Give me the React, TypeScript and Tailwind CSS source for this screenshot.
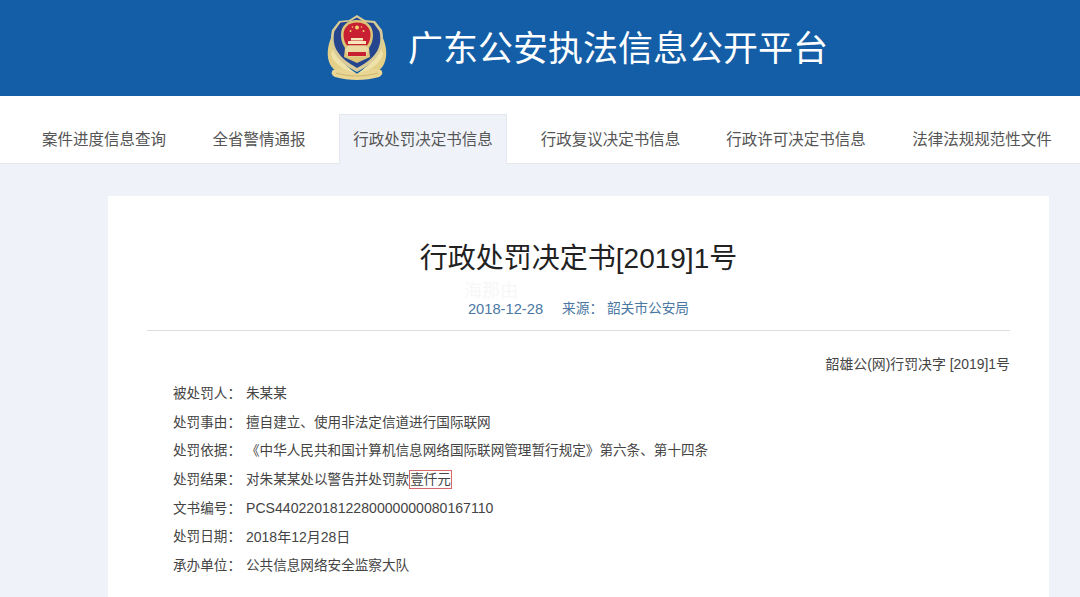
import React from 'react';

const FONT = 'font-["Liberation_Sans","Noto_Sans_CJK_SC",sans-serif]';

const tabs = [
    { label: '案件进度信息查询', cls: 'w-[170px]' },
    { label: '全省警情通报', cls: 'w-[140px]' },
    { label: '行政处罚决定书信息', cls: 'ml-[10px] w-[168px]', active: true },
    { label: '行政复议决定书信息', cls: 'ml-[11px] w-[185px]' },
    { label: '行政许可决定书信息', cls: 'w-[186px]' },
    { label: '法律法规规范性文件', cls: 'w-[186px]' },
];

const rows = [
    { label: '被处罚人', value: '朱某某', cls: '' },
    { label: '处罚事由', value: '擅自建立、使用非法定信道进行国际联网', cls: '' },
    { label: '处罚依据', value: '《中华人民共和国计算机信息网络国际联网管理暂行规定》第六条、第十四条', cls: '' },
    { label: '处罚结果', value: '', cls: '' },
    { label: '文书编号', value: 'PCS4402201812280000000080167110', cls: 'text-[14.100px]' },
    { label: '处罚日期', value: '2018年12月28日', cls: 'text-[14px]' },
    { label: '承办单位', value: '公共信息网络安全监察大队', cls: '' },
];

function Emblem() {
    return (
        <svg width="62" height="68" viewBox="0 0 62 68" className="shrink-0">
            {/* wheat wreath */}
            <path d="M6 22C1 32 0 44 5 52c3 4 6 6 10 8h32c4-2 7-4 10-8 5-8 4-20-1-30-1 14-6 26-25 38C12 48 7 36 6 22z" fill="#e3d088" />
            <path d="M9 30c1 10 6 19 22 30C15 56 7 48 5 40zM53 30c-1 10-6 19-22 30 16-4 24-12 26-20z" fill="#efe2a8" />
            <path d="M7 56c8-2 16 0 24 4 8-4 16-6 24-4 2 2 2 5-2 7-7 2-14 3-22 3s-15-1-22-3c-4-2-4-5-2-7z" fill="#e9d695" />
            <path d="M10 59c7 2 14 3 21 3s14-1 21-3" fill="none" stroke="#cdb66c" strokeWidth="1" />
            {/* shield */}
            <path d="M31 1l8 5 10 1 7 9c2 9 1 15-2 22-5 9-13 15-23 20C21 53 13 47 8 38c-3-7-4-13-2-22l7-9 10-1z" fill="#d8cb97" />
            <path d="M31 3.500l7 4.500 9.500 1 6 8.500c1.500 7 1 13-2 19-4.500 8-12 13-20.500 17.500C22.500 49 15 44 10.500 36c-3-6-3.500-12-2-19l6-8.500 9.500-1z" fill="#25468e" />
            {/* badge */}
            <path d="M31 6c10 0 16 6 16 15 0 6-2 10-4 13l1 9-13 6-13-6 1-9c-2-3-4-7-4-13 0-9 6-15 16-15z" fill="#dcc578" />
            <path d="M31 8.500c9 0 13.500 5.500 13.500 12.500 0 5-2 8.500-3.500 10.500H21c-1.500-2-3.500-5.500-3.500-10.500 0-7 4.500-12.500 13.500-12.500z" fill="#c81f33" />
            <circle cx="31" cy="13.500" r="2" fill="#f2d46f" />
            <circle cx="24.500" cy="17" r="1" fill="#f2d46f" />
            <circle cx="37.500" cy="17" r="1" fill="#f2d46f" />
            <circle cx="26.500" cy="13" r="0.800" fill="#f2d46f" />
            <circle cx="35.500" cy="13" r="0.800" fill="#f2d46f" />
            <path d="M25 24h12v2.500H25zM22 27h18v3H22z" fill="#f4e8b8" />
            <path d="M22 31.500h18l3 4-3 7H22l-3-7z" fill="#ead9a0" />
            <path d="M22 38h18v4H22z" fill="#c81f33" />
        </svg>
    );
}

export default function App() {
    return (
        <div className={`${FONT} h-[597px] w-[1080px] overflow-hidden bg-[#eff3f9]`}>
            {/* Header */}
            <div className="flex h-[96px] items-center bg-[#135ea6] pl-[326px]">
                <Emblem />
                <h1 className="ml-[20px] text-[35px] leading-none text-white">广东公安执法信息公开平台</h1>
            </div>

            {/* Tabs */}
            <div className="flex h-[68px] items-end border-b border-[#e6e8ec] bg-white pl-[19px]">
                {tabs.map((tab) => (
                    <div
                        key={tab.label}
                        className={
                            tab.active
                                ? `relative -mb-px flex h-[50px] ${tab.cls} items-center justify-center border-x border-t border-[#e4e8ee] bg-[#eff3f9] text-[15.500px] text-[#555555]`
                                : `-mb-px flex h-[50px] ${tab.cls} items-center justify-center pt-[2px] text-[15.500px] text-[#555555]`
                        }
                    >
                        {tab.label}
                    </div>
                ))}
            </div>

            {/* Decision document */}
            <div className="relative ml-[108px] mt-[32px] h-[420px] w-[941px] bg-white px-[39px]">
                <h2 className="pt-[44px] text-center text-[28px] leading-[38px] text-[#222222]">行政处罚决定书[2019]1号</h2>
                {/* faint watermark left over in the capture */}
                <span className="absolute left-[356px] top-[84px] text-[18px] leading-[22px] text-[#f7f7f7]">海那由</span>
                <div className="mt-[21px] flex items-center justify-center gap-[19px] border-b border-[#dddddd] pb-[11px] leading-[20px] text-[#4a77a3]">
                    <span className="text-[14.700px]">2018-12-28</span>
                    <span className="text-[13.700px]">来源： 韶关市公安局</span>
                </div>
                <p className="mt-[23px] text-right text-[13.900px] leading-[20px] text-[#444444]">韶雄公(网)行罚决字 [2019]1号</p>
                <div className="mt-[6px] pl-[26px] text-[13.600px] text-[#444444]">
                    {rows.map((row) => (
                        <div key={row.label} className="flex h-[28.670px] items-center">
                            <span className="w-[73px] shrink-0">{row.label}：</span>
                            {row.value ? (
                                <span className={row.cls}>{row.value}</span>
                            ) : (
                                <span>
                                    对朱某某处以警告并处罚款
                                    <span className="border border-[#d9686c] py-[1px]">壹仟元</span>
                                </span>
                            )}
                        </div>
                    ))}
                </div>
            </div>
        </div>
    );
}
